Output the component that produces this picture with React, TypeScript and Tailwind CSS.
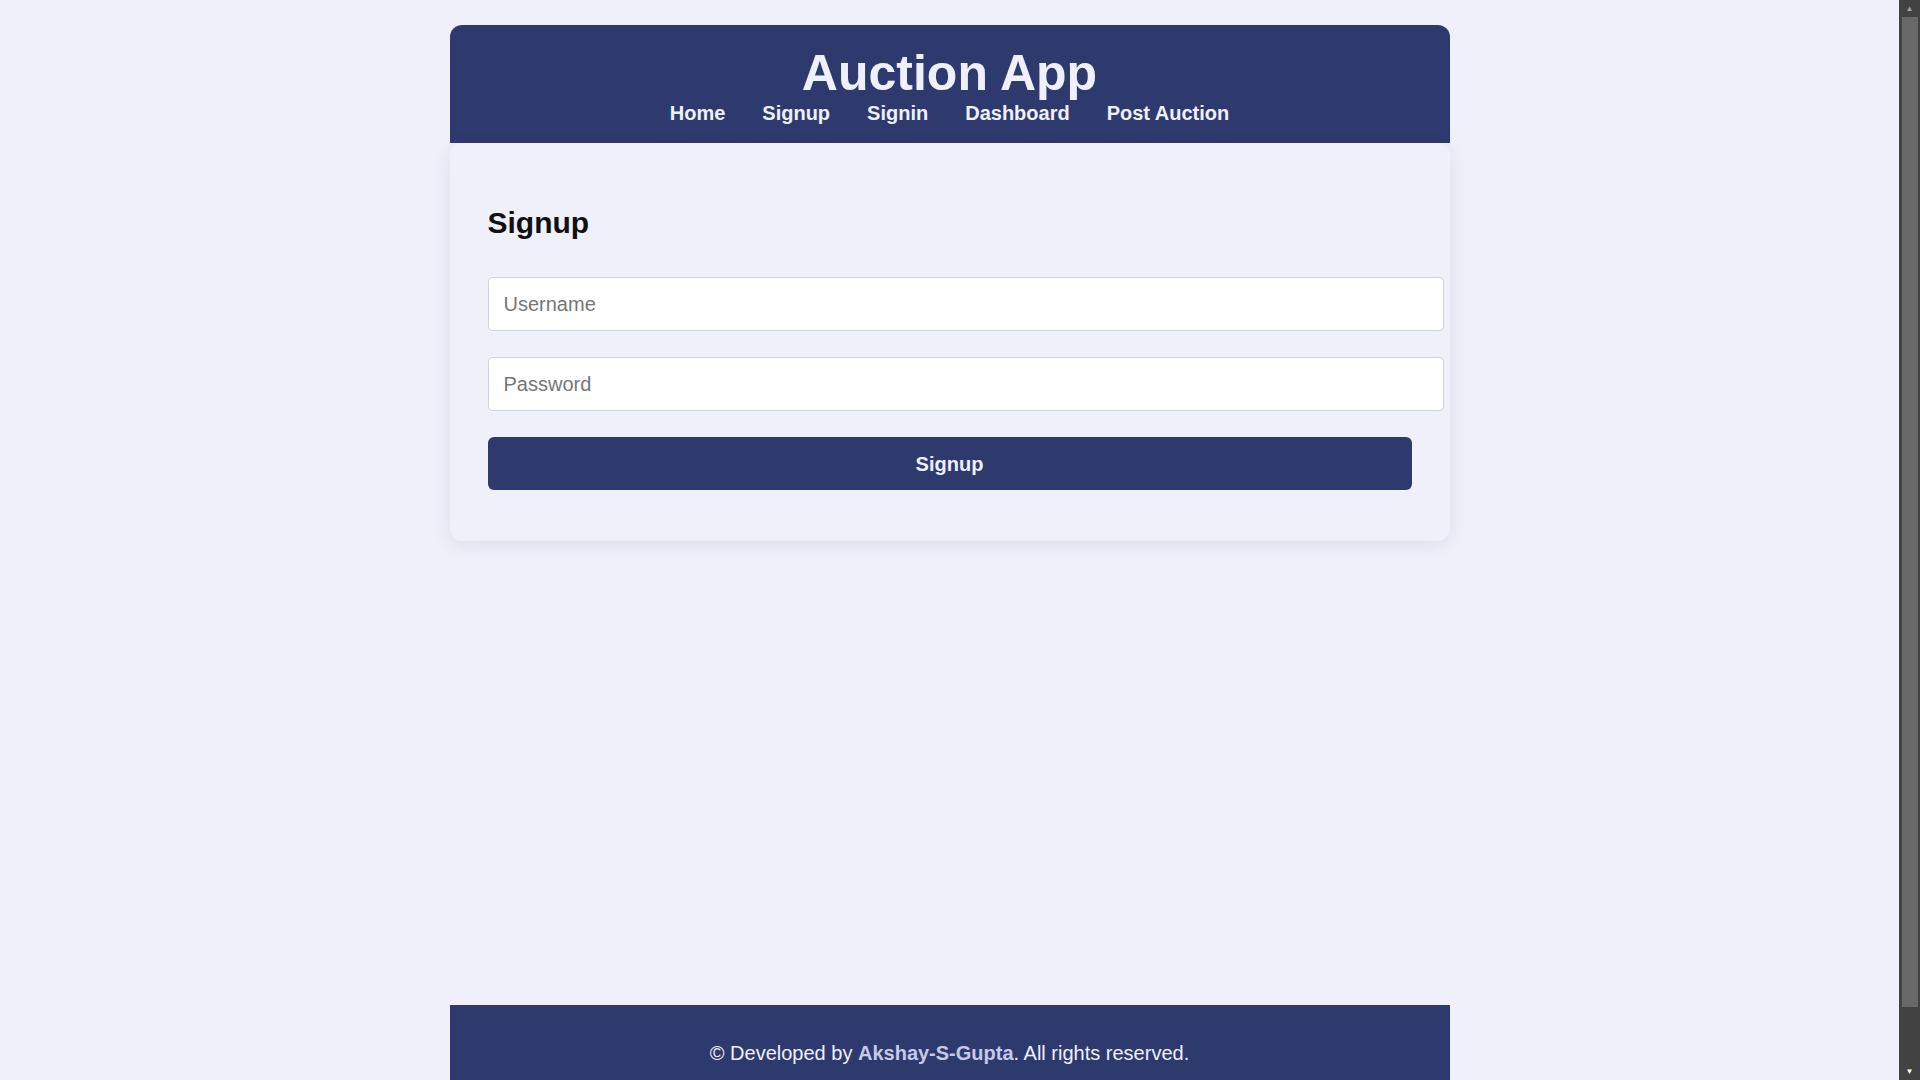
import React, { useState } from 'react';

const navLinks = ['Home', 'Signup', 'Signin', 'Dashboard', 'Post Auction'];

const App: React.FC = () => {
  const [username, setUsername] = useState('');
  const [password, setPassword] = useState('');

  const handleSubmit = (e: React.FormEvent) => {
    e.preventDefault();
  };

  return (
    <div className="flex bg-[#eff0fa] font-['Liberation_Sans',Arial,sans-serif]">
      <div className="min-h-screen flex-1 pt-[25px]">
        <div className="mx-auto w-[1000px]">
          {/* Header */}
          <header className="rounded-t-xl bg-[#2e3a6e] pt-5 pb-[18px] text-center text-[#eef0fb]">
            <h1 className="text-[50px] font-bold leading-[57px]">Auction App</h1>
            <nav className="flex justify-center gap-[37px] text-[20px] font-bold leading-[23px]">
              {navLinks.map((link) => (
                <a key={link} href="#" className="text-[#eef0fb]">
                  {link}
                </a>
              ))}
            </nav>
          </header>

          {/* Main */}
          <main className="min-h-[862px]">
            <div className="rounded-xl bg-[#eff0fa] px-[38px] pt-[62px] pb-[51px] shadow-[0_4px_18px_rgba(40,45,90,0.09)]">
              <h2 className="mb-[37px] text-[30px] font-bold leading-[35px] text-[#111111]">Signup</h2>
              <form onSubmit={handleSubmit} className="flex flex-col gap-[26px]">
                <input
                  type="text"
                  placeholder="Username"
                  value={username}
                  onChange={(e) => setUsername(e.target.value)}
                  className="box-content w-full rounded-[5px] border border-[#cdd0ea] bg-white p-[15px] text-[20px] leading-[22px] text-[#222] placeholder-[#767676] outline-none"
                />
                <input
                  type="password"
                  placeholder="Password"
                  value={password}
                  onChange={(e) => setPassword(e.target.value)}
                  className="box-content w-full rounded-[5px] border border-[#cdd0ea] bg-white p-[15px] text-[20px] leading-[22px] text-[#222] placeholder-[#767676] outline-none"
                />
                <button
                  type="submit"
                  className="h-[53px] w-full rounded-md bg-[#2e3a6e] text-[20px] font-bold text-[#eef0fb]"
                >
                  Signup
                </button>
              </form>
            </div>
          </main>

          {/* Footer */}
          <footer className="h-[135px] bg-[#2e3a6e] pt-[37px] text-center text-[20px] leading-[23px] text-[#eef0fb]">
            <p>
              © Developed by <span className="font-bold text-[#c5cae9]">Akshay-S-Gupta</span>. All rights reserved.
            </p>
          </footer>
        </div>
      </div>

      {/* Scrollbar strip */}
      <aside className="sticky top-0 flex h-screen w-[21px] flex-col items-center bg-[#424242]">
        <div className="flex h-[17px] items-center text-[8px] leading-none text-[#a0a0a0]">▲</div>
        <div className="h-[990px] w-[16px] bg-[#686868]" />
        <div className="flex-1" />
        <div className="flex h-[17px] items-center text-[8px] leading-none text-white">▼</div>
      </aside>
    </div>
  );
};

export default App;
